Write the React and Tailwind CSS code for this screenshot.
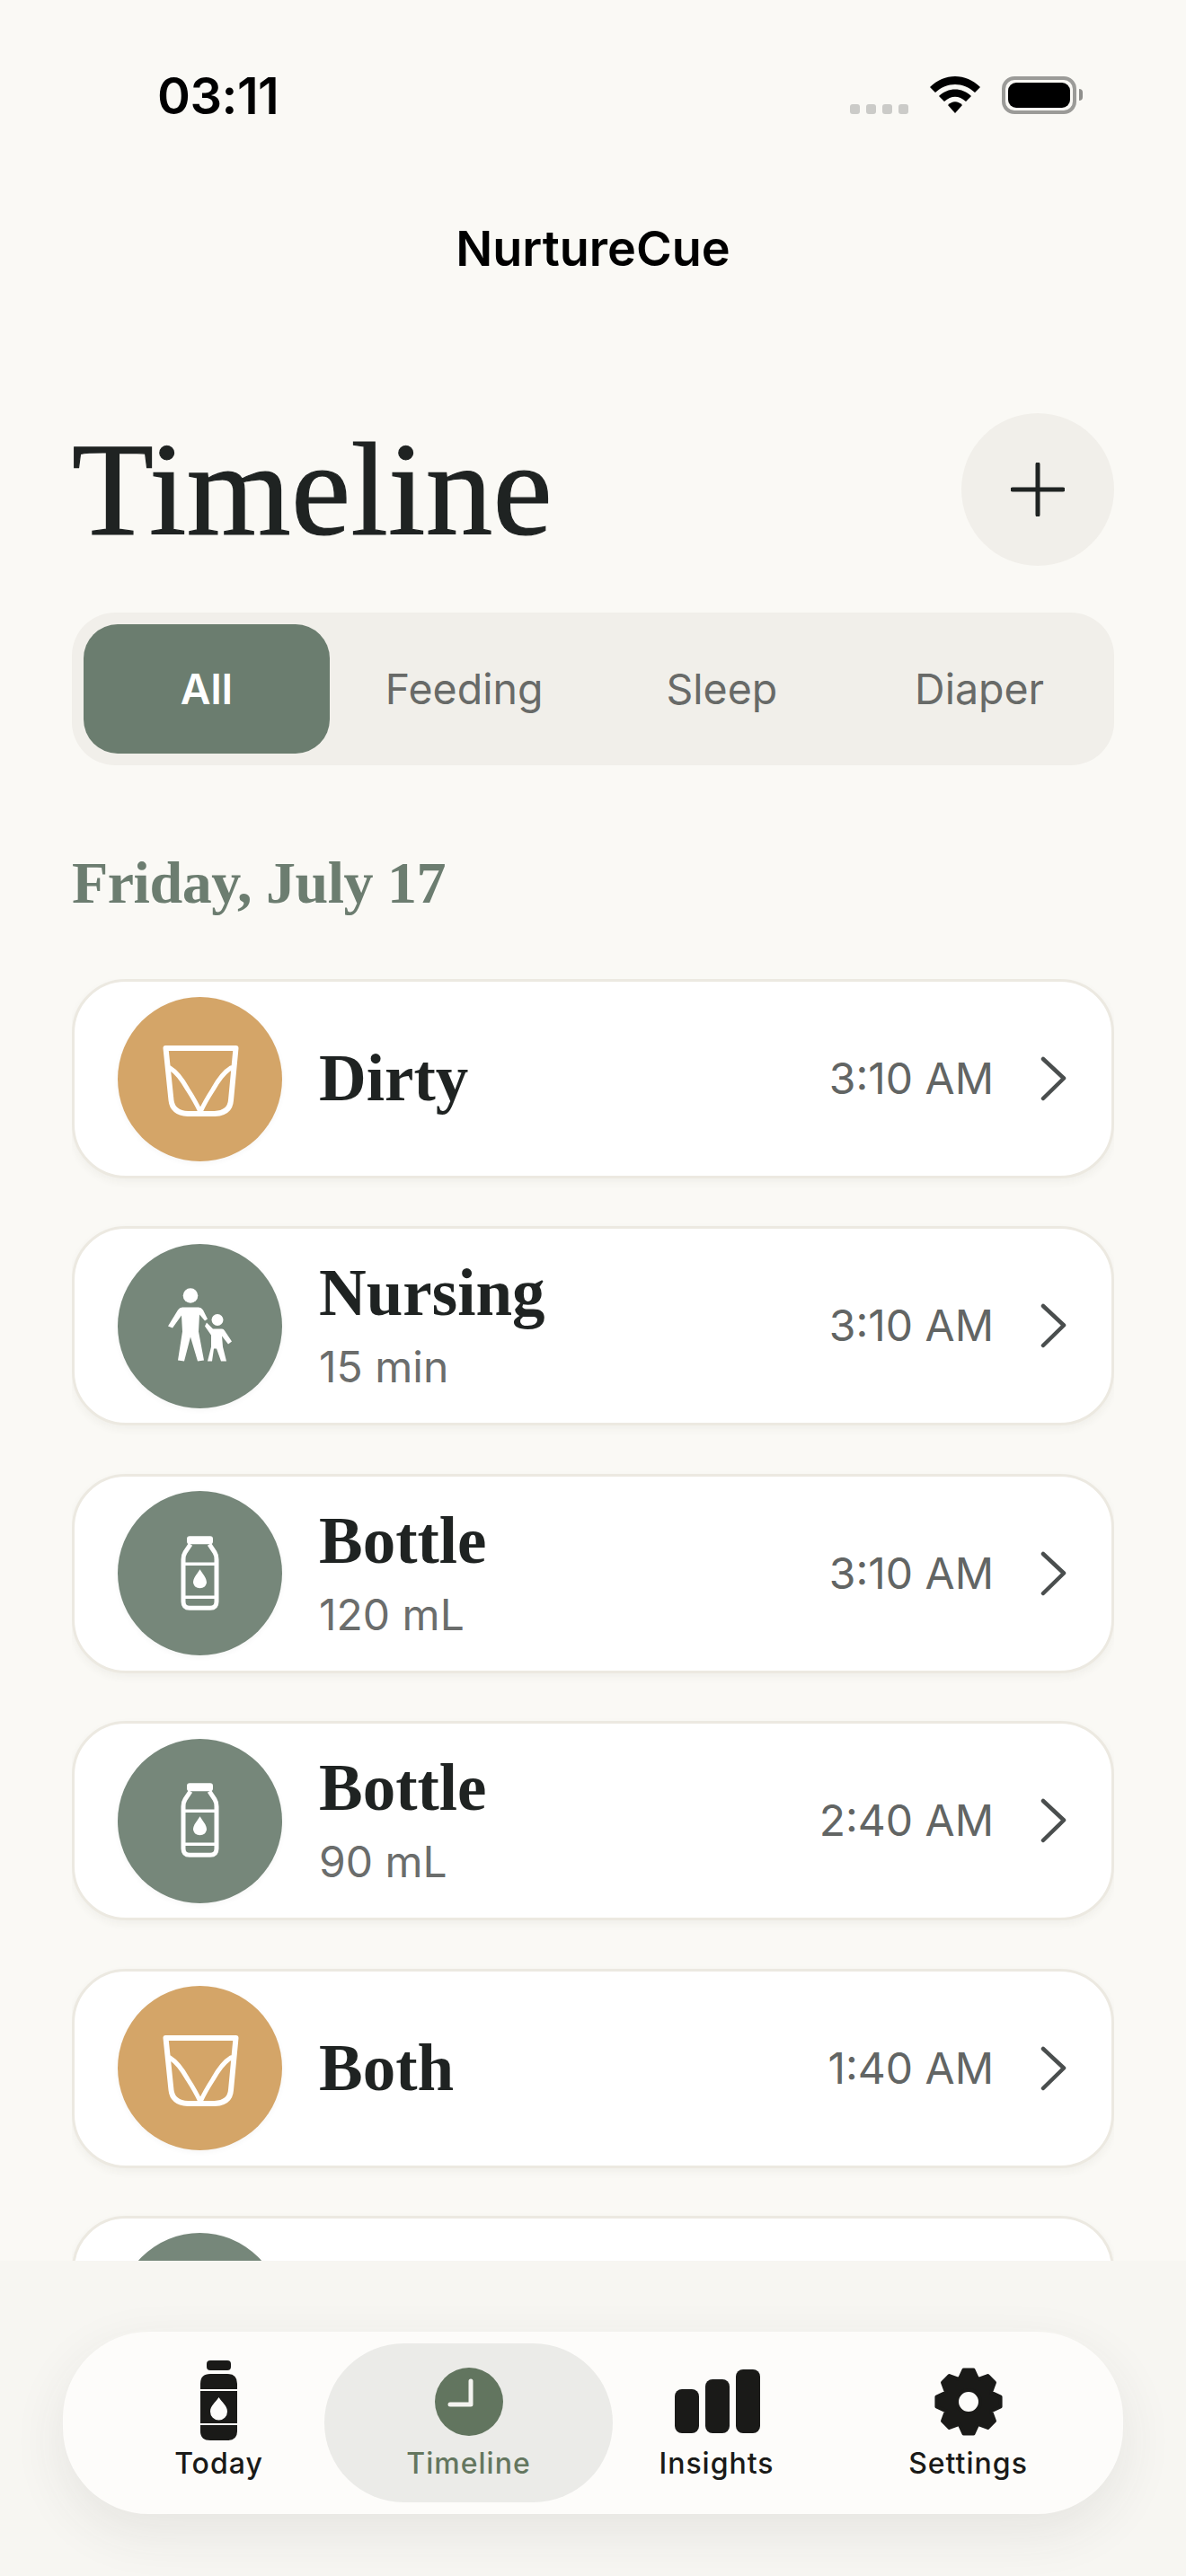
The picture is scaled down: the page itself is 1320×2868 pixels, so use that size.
import React from "react";

const serif = "font-['Liberation_Serif',serif]";
const sans = "font-['Inter',sans-serif]";

function Diaper() {
  return (
    <svg width="110" height="110" viewBox="-55 -51 110 110" fill="none" stroke="#fff" strokeWidth="6" strokeLinejoin="round" strokeLinecap="round">
      <path d="M-38.5 -30 H39.5 L34 28 Q33 42 16 43 H-14 Q-31 42 -32.5 28 Z" />
      <path d="M-34 -8 Q-24 -2 -14 16 Q-5 30 0 41 Q5 30 14 16 Q24 -2 34 -8" strokeWidth="5" />
    </svg>
  );
}

function Family() {
  return (
    <svg width="110" height="110" viewBox="-2 10.5 110 110" fill="#fff">
      <circle cx="42" cy="32" r="8.3" />
      <path d="M33 45 H51 Q54 45 56 48 L61 58 L58 60 L52 53 L51 72 L57 104 L50 105 L42 78 L35 105 L28 104 L33 72 L32 54 L22 68 L17 66 L28 48 Q30 45 33 45Z" />
      <circle cx="72" cy="59" r="6.5" />
      <path d="M60 62 L67 69 H77 Q79 69 80 71 L88 83 L84 86 L77 77 L78 89 L82 105 L76 105 L71 91 L68 91 L66 105 L61 105 L65 89 L65 76 L58 66 Z" />
    </svg>
  );
}

function Bottle() {
  return (
    <svg width="110" height="110" viewBox="-2 -3.3 110 110" fill="none" stroke="#fff" strokeWidth="5">
      <rect x="39" y="11" width="27" height="7" rx="2" fill="#fff" strokeWidth="2" />
      <path d="M42 19 L36 28 Q34 31 34 36 V83 Q34 90 41 90 H64 Q71 90 71 83 V36 Q71 31 69 28 L63 19" />
      <path d="M34 41 H71 M34 78 H71" strokeWidth="3.5" />
      <path d="M52.5 47 C56 53 60 56 60 62 A7.7 7.7 0 0 1 45 62 C45 56 49 53 52.5 47Z" fill="#fff" stroke="none" />
    </svg>
  );
}

function Chevron() {
  return (
    <svg width="30" height="50" viewBox="0 0 30 50" fill="none" stroke="#4a4e4e" strokeWidth="4.5" strokeLinecap="round" strokeLinejoin="round">
      <path d="M4 3 L27 24.5 L4 47" />
    </svg>
  );
}

function Card({ title, sub, time, tone, Icon }) {
  return (
    <div className="flex-none h-[222px] rounded-[60px] bg-white border-[3px] border-[#ece9e1] shadow-[0_4px_10px_rgba(60,55,40,0.05)] flex items-center pl-[48px] pr-[50px]">
      <div className={`flex-none w-[183px] h-[183px] rounded-full flex items-center justify-center shadow-[0_2px_6px_rgba(0,0,0,0.04)] ${tone === "amber" ? "bg-[#d4a568]" : "bg-[#76877a]"}`}>
        <Icon />
      </div>
      <div className="ml-[41px] flex-1 flex flex-col">
        {title && <div className={`${serif} font-bold text-[73px] leading-[76px] text-[#1f2322]`}>{title}</div>}
        {sub && <div className={`${sans} text-[48px] leading-[56px] mt-[16px] text-[#6b6d6c]`}>{sub}</div>}
      </div>
      {time && <div className={`${sans} text-[48px] leading-[56px] text-[#626564] mr-[51px]`}>{time}</div>}
      {time && <Chevron />}
    </div>
  );
}

const gearPath = (() => {
  const pts = [];
  const n = 8;
  for (let i = 0; i < n; i++) {
    const a = (i / n) * Math.PI * 2 - Math.PI / 2;
    const step = Math.PI * 2 / n;
    const seq = [[-0.5, 27], [-0.24, 36], [0.24, 36], [0.5, 27]];
    for (const [f, r] of seq) {
      const t = a + f * step * (Math.abs(f) < 0.3 ? 0.8 : 1);
      pts.push(`${(40 + r * Math.cos(t)).toFixed(2)} ${(40 + r * Math.sin(t)).toFixed(2)}`);
    }
  }
  return "M" + pts.join(" L") + " Z M53 40 A13 13 0 1 0 27 40 A13 13 0 1 0 53 40 Z";
})();

function TabItem({ label, active, extra = "", children }) {
  return (
    <div className={`relative flex flex-col items-center justify-start ${extra} ${active ? "w-[321px] -mx-[22px] h-[177px] rounded-full bg-[#ebebe8] text-[#64765f]" : "w-[277px] h-[177px] text-[#1a1a18]"}`}>
      <div className="h-[113px] flex items-end justify-center">{children}</div>
      <div className={`${sans} font-medium text-[32px] leading-[40px] mt-[1px] tracking-[1px]`}>{label}</div>
    </div>
  );
}

export default function App() {
  return (
    <div className="w-[1320px] h-[2868px] bg-[#faf9f5] flex flex-col overflow-hidden">
      <div className="h-[212px] flex-none flex justify-between items-start pt-[80px] pl-[175px] pr-[122px]">
        <div className={`${sans} font-semibold text-[56px] leading-[54px] text-black tracking-[-0.5px]`}>03:11</div>
        <div className="flex items-start mt-[5px]">
          <div className="flex gap-[7px] mt-[31px] mr-[24px]">
            <div className="w-[11px] h-[11px] rounded-[3px] bg-[#cbcbc8]" />
            <div className="w-[11px] h-[11px] rounded-[3px] bg-[#cbcbc8]" />
            <div className="w-[11px] h-[11px] rounded-[3px] bg-[#cbcbc8]" />
            <div className="w-[11px] h-[11px] rounded-[3px] bg-[#cbcbc8]" />
          </div>
          <svg width="56" height="42" viewBox="0 0 56 42" fill="#000" className="mr-[24px]">
            <path d="M0 12 C16 -4 40 -4 56 12 L50 18 C37 6 19 6 6 18 Z" />
            <path d="M10 22 C20 12 36 12 46 22 L40 28 C32 21 24 21 16 28 Z" />
            <path d="M20 32 C25 27 31 27 36 32 L28 41 Z" />
          </svg>
          <div className="relative w-[83px] h-[42px] rounded-[14px] border-[4px] border-[#9b9b98] p-[3px] bg-[#faf9f5]">
            <div className="w-full h-full rounded-[9px] bg-black" />
            <div className="absolute -right-[11px] top-[10px] w-[4px] h-[13px] rounded-r-full bg-[#8f8f8c]" />
          </div>
        </div>
      </div>
      <div className={`${sans} font-semibold flex-none text-center text-[54px] leading-[68px] mt-[31px] text-black`}>NurtureCue</div>
      <div className="flex-none flex justify-between items-center mx-[80px] mt-[148px] h-[171px]">
        <h1 className={`${serif} text-[149px] leading-[171px] tracking-[0.3px] text-[#1f2322] [-webkit-text-stroke:1.2px_#1f2322]`}>Timeline</h1>
        <div className="w-[170px] h-[170px] rounded-full bg-[#f1efea] flex items-center justify-center">
          <svg width="60" height="60" viewBox="0 0 60 60" stroke="#1f2322" strokeWidth="5" strokeLinecap="round">
            <path d="M30 2 V58 M2 30 H58" />
          </svg>
        </div>
      </div>
      <div className="flex-none mx-[80px] mt-[52px] h-[170px] rounded-[48px] bg-[#f1efea] p-[13px] grid grid-cols-4 gap-[13px]">
        {["All", "Feeding", "Sleep", "Diaper"].map((t, i) => (
          <div key={t} className={`${sans} text-[46.5px] pt-[2px] flex items-center justify-center rounded-[38px] ${i === 0 ? "bg-[#6b7d6f] text-white font-semibold" : "text-[#686a68]"}`}>{t}</div>
        ))}
      </div>
      <div className={`${serif} flex-none font-bold text-[66px] leading-[80px] tracking-[-0.5px] text-[#6c7d70] mx-[80px] mt-[91px]`}>Friday, July 17</div>
      <div className="flex-none mx-[80px] mt-[67px] h-[1427px] overflow-hidden flex flex-col gap-[53.4px]">
        <Card title="Dirty" time="3:10 AM" tone="amber" Icon={Diaper} />
        <Card title="Nursing" sub="15 min" time="3:10 AM" Icon={Family} />
        <Card title="Bottle" sub="120 mL" time="3:10 AM" Icon={Bottle} />
        <Card title="Bottle" sub="90 mL" time="2:40 AM" Icon={Bottle} />
        <Card title="Both" time="1:40 AM" tone="amber" Icon={Diaper} />
        <Card Icon={Bottle} />
      </div>
      <div className="flex-1 bg-[#f7f6f2] flex flex-col">
        <div className="mx-[70px] mt-[79px] h-[203px] rounded-[96px] bg-[#fdfcfa] shadow-[0_20px_60px_rgba(60,60,50,0.09)] flex items-center pl-[35px]">
          <TabItem label="Today">
            <svg width="42" height="90" viewBox="0 0 42 90" fill="#1a1a18" className="mb-[4px]">
              <rect x="7" y="0" width="27" height="11" rx="4" />
              <path d="M0 32 V26 Q0 15 11 15 H30 Q41 15 41 26 V32 Z" />
              <path fillRule="evenodd" d="M0 34 H41 V70 H0 Z M20.5 41 C17 47 11 50 11 57 A9.5 9.5 0 0 0 30 57 C30 50 24 47 20.5 41 Z" />
              <path d="M0 72 H41 V79 Q41 89 30 89 H11 Q0 89 0 79 Z" />
            </svg>
          </TabItem>
          <TabItem label="Timeline" active extra="translate-x-[1px]">
            <svg width="76" height="76" viewBox="0 0 76 76" className="mb-[10px]">
              <circle cx="38" cy="38" r="38" fill="#62755f" />
              <path d="M40 15 V41 H17" fill="none" stroke="#f4f4f0" strokeWidth="5" strokeLinecap="round" strokeLinejoin="round" />
            </svg>
          </TabItem>
          <TabItem label="Insights">
            <svg width="96" height="71" viewBox="0 0 96 71" fill="#1a1a18" className="mb-[13px] ml-[3px]">
              <rect x="0" y="22" width="27" height="49" rx="8" />
              <rect x="34" y="11" width="27" height="60" rx="8" />
              <rect x="68" y="0" width="27" height="71" rx="8" />
            </svg>
          </TabItem>
          <TabItem label="Settings" extra="ml-[3px]">
            <svg width="80" height="80" viewBox="0 0 80 80" fill="#1a1a18" stroke="#1a1a18" strokeWidth="4" strokeLinejoin="round" className="mb-[8px]">
              <path fillRule="evenodd" d={gearPath} />
            </svg>
          </TabItem>
        </div>
      </div>
    </div>
  );
}
